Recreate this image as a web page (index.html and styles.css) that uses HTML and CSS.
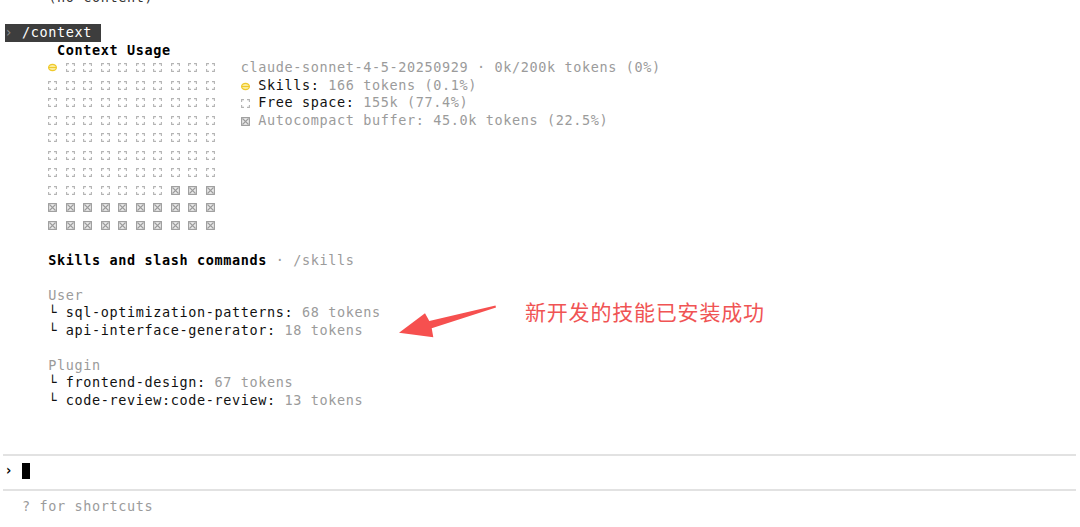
FILE: index.html
```html
<!DOCTYPE html>
<html lang="zh-CN">
<head>
<meta charset="utf-8">
<title>/context</title>
<link rel="stylesheet" href="styles.css">
</head>
<body>
<svg class="defs" width="0" height="0" aria-hidden="true">
  <symbol id="free" viewBox="0 0 9 9">
    <path d="M0.6 3V0.6H3M6 0.6H8.4V3M8.4 6V8.4H6M3 8.4H0.6V6" fill="none" stroke="#b4b4b4" stroke-width="1.1"/>
  </symbol>
  <symbol id="buf" viewBox="0 0 9 9">
    <rect x="0.6" y="0.6" width="7.8" height="7.8" fill="#ececec" stroke="#9c9c9c" stroke-width="1.1"/>
    <path d="M1.5 1.5L7.5 7.5M7.5 1.5L1.5 7.5" stroke="#9c9c9c" stroke-width="1.1"/>
  </symbol>
  <symbol id="used" viewBox="0 0 9 9">
    <ellipse cx="4.5" cy="4.5" rx="3.9" ry="3.1" fill="#fbeea0" stroke="#efc92c" stroke-width="1.2"/>
    <path d="M0.8 4.5H8.2" stroke="#efc92c" stroke-width="1.1"/>
  </symbol>
</svg>

<main class="term">
  <div class="ln dark">     (no content)</div>
  <div class="ln"></div>
  <div class="ln"><span class="cmd"><span class="chev">›</span> /context </span></div>
  <div class="ln b">      Context Usage</div>

  <section class="usage">
    <div class="grid">
      <svg class="ic"><use href="#used"/></svg><svg class="ic"><use href="#free"/></svg><svg class="ic"><use href="#free"/></svg><svg class="ic"><use href="#free"/></svg><svg class="ic"><use href="#free"/></svg><svg class="ic"><use href="#free"/></svg><svg class="ic"><use href="#free"/></svg><svg class="ic"><use href="#free"/></svg><svg class="ic"><use href="#free"/></svg><svg class="ic"><use href="#free"/></svg>
      <svg class="ic"><use href="#free"/></svg><svg class="ic"><use href="#free"/></svg><svg class="ic"><use href="#free"/></svg><svg class="ic"><use href="#free"/></svg><svg class="ic"><use href="#free"/></svg><svg class="ic"><use href="#free"/></svg><svg class="ic"><use href="#free"/></svg><svg class="ic"><use href="#free"/></svg><svg class="ic"><use href="#free"/></svg><svg class="ic"><use href="#free"/></svg>
      <svg class="ic"><use href="#free"/></svg><svg class="ic"><use href="#free"/></svg><svg class="ic"><use href="#free"/></svg><svg class="ic"><use href="#free"/></svg><svg class="ic"><use href="#free"/></svg><svg class="ic"><use href="#free"/></svg><svg class="ic"><use href="#free"/></svg><svg class="ic"><use href="#free"/></svg><svg class="ic"><use href="#free"/></svg><svg class="ic"><use href="#free"/></svg>
      <svg class="ic"><use href="#free"/></svg><svg class="ic"><use href="#free"/></svg><svg class="ic"><use href="#free"/></svg><svg class="ic"><use href="#free"/></svg><svg class="ic"><use href="#free"/></svg><svg class="ic"><use href="#free"/></svg><svg class="ic"><use href="#free"/></svg><svg class="ic"><use href="#free"/></svg><svg class="ic"><use href="#free"/></svg><svg class="ic"><use href="#free"/></svg>
      <svg class="ic"><use href="#free"/></svg><svg class="ic"><use href="#free"/></svg><svg class="ic"><use href="#free"/></svg><svg class="ic"><use href="#free"/></svg><svg class="ic"><use href="#free"/></svg><svg class="ic"><use href="#free"/></svg><svg class="ic"><use href="#free"/></svg><svg class="ic"><use href="#free"/></svg><svg class="ic"><use href="#free"/></svg><svg class="ic"><use href="#free"/></svg>
      <svg class="ic"><use href="#free"/></svg><svg class="ic"><use href="#free"/></svg><svg class="ic"><use href="#free"/></svg><svg class="ic"><use href="#free"/></svg><svg class="ic"><use href="#free"/></svg><svg class="ic"><use href="#free"/></svg><svg class="ic"><use href="#free"/></svg><svg class="ic"><use href="#free"/></svg><svg class="ic"><use href="#free"/></svg><svg class="ic"><use href="#free"/></svg>
      <svg class="ic"><use href="#free"/></svg><svg class="ic"><use href="#free"/></svg><svg class="ic"><use href="#free"/></svg><svg class="ic"><use href="#free"/></svg><svg class="ic"><use href="#free"/></svg><svg class="ic"><use href="#free"/></svg><svg class="ic"><use href="#free"/></svg><svg class="ic"><use href="#free"/></svg><svg class="ic"><use href="#free"/></svg><svg class="ic"><use href="#free"/></svg>
      <svg class="ic"><use href="#free"/></svg><svg class="ic"><use href="#free"/></svg><svg class="ic"><use href="#free"/></svg><svg class="ic"><use href="#free"/></svg><svg class="ic"><use href="#free"/></svg><svg class="ic"><use href="#free"/></svg><svg class="ic"><use href="#free"/></svg><svg class="ic"><use href="#buf"/></svg><svg class="ic"><use href="#buf"/></svg><svg class="ic"><use href="#buf"/></svg>
      <svg class="ic"><use href="#buf"/></svg><svg class="ic"><use href="#buf"/></svg><svg class="ic"><use href="#buf"/></svg><svg class="ic"><use href="#buf"/></svg><svg class="ic"><use href="#buf"/></svg><svg class="ic"><use href="#buf"/></svg><svg class="ic"><use href="#buf"/></svg><svg class="ic"><use href="#buf"/></svg><svg class="ic"><use href="#buf"/></svg><svg class="ic"><use href="#buf"/></svg>
      <svg class="ic"><use href="#buf"/></svg><svg class="ic"><use href="#buf"/></svg><svg class="ic"><use href="#buf"/></svg><svg class="ic"><use href="#buf"/></svg><svg class="ic"><use href="#buf"/></svg><svg class="ic"><use href="#buf"/></svg><svg class="ic"><use href="#buf"/></svg><svg class="ic"><use href="#buf"/></svg><svg class="ic"><use href="#buf"/></svg><svg class="ic"><use href="#buf"/></svg>
    </div>
    <div class="legend">
      <div class="ln dim">claude-sonnet-4-5-20250929 · 0k/200k tokens (0%)</div>
      <div class="ln"><svg class="ic in"><use href="#used"/></svg> Skills:<span class="dim"> 166 tokens (0.1%)</span></div>
      <div class="ln"><svg class="ic in"><use href="#free"/></svg> Free space:<span class="dim"> 155k (77.4%)</span></div>
      <div class="ln dim"><svg class="ic in"><use href="#buf"/></svg> Autocompact buffer: 45.0k tokens (22.5%)</div>
    </div>
  </section>

  <div class="ln"></div>
  <div class="ln"><span class="b">     Skills and slash commands</span><span class="dim"> · /skills</span></div>
  <div class="ln"></div>
  <div class="ln dim">     User</div>
  <div class="ln">     └ sql-optimization-patterns:<span class="dim"> 68 tokens</span></div>
  <div class="ln">     └ api-interface-generator:<span class="dim"> 18 tokens</span></div>
  <div class="ln"></div>
  <div class="ln dim">     Plugin</div>
  <div class="ln">     └ frontend-design:<span class="dim"> 67 tokens</span></div>
  <div class="ln">     └ code-review:code-review:<span class="dim"> 13 tokens</span></div>
  <div class="ln"></div>
  <div class="ln"></div>
  <div class="sep"></div>
  <div class="ln prompt"><span class="arrowch">›</span> <span class="cursor"></span></div>
  <div class="sep"></div>
  <div class="ln dim shortcuts">  ? for shortcuts</div>
</main>

<aside class="note">
  <svg class="note-arrow" width="110" height="40" viewBox="390 302 110 40" aria-hidden="true">
    <polygon points="399,332.7 425,313.3 429.3,321 495.5,305.5 496,307.5 431.7,328.3 433.3,337.3" fill="#f6504f"/>
  </svg>
  <span class="note-text">新开发的技能已安装成功</span>
</aside>
</body>
</html>
```

FILE: styles.css
```css
:root {
  --c: 8.75px;
  --lh: 17.5px;
}

html, body {
  margin: 0;
  padding: 0;
  background: #ffffff;
}

body {
  width: 1080px;
  height: 527px;
  overflow: hidden;
  position: relative;
  font-family: "DejaVu Sans Mono", "Liberation Mono", monospace;
  font-size: 13.5px;
  letter-spacing: 0.6223px;
  color: #111111;
}

.defs {
  position: absolute;
  width: 0;
  height: 0;
}

.term {
  margin-top: -11px;
  padding-left: 4.5px;
}

.ln {
  height: var(--lh);
  line-height: var(--lh);
  white-space: pre;
}

.b {
  font-weight: bold;
  color: #000;
}

.dim {
  color: #9b9b9b;
}

.dark {
  color: #333;
}

.cmd {
  display: inline-block;
  background: #3d3d3d;
  color: #ffffff;
}

.chev {
  color: #8a8a8a;
}

.usage {
  display: flex;
  gap: calc(2 * var(--c));
  padding-left: calc(5 * var(--c));
}

.grid {
  display: grid;
  grid-template-columns: repeat(10, calc(2 * var(--c)));
  grid-auto-rows: var(--lh);
  align-items: center;
}

.ic {
  display: block;
  width: 9px;
  height: 9px;
}

.ic.in {
  display: inline-block;
  vertical-align: -1px;
  margin-right: -0.25px;
}

.sep {
  height: var(--lh);
  display: flex;
  align-items: flex-start;
  margin-left: -4.5px;
}

.sep::before {
  content: "";
  flex: 1;
  height: 2px;
  margin: 9.5px 4px 0 3px;
  background: #e2e2e2;
}

.prompt .arrowch {
  font-weight: bold;
  color: #000;
}

.cursor {
  display: inline-block;
  width: 8px;
  height: 16px;
  background: #000;
  vertical-align: -4px;
}

.shortcuts {
  padding-top: 1.5px;
}

.note {
  position: absolute;
  left: 390px;
  top: 302px;
  display: flex;
  align-items: center;
}

.note-arrow {
  display: block;
}

.note-text {
  position: absolute;
  left: 135px;
  top: -5px;
  white-space: nowrap;
  font-family: "Noto Sans CJK SC", sans-serif;
  font-size: 21px;
  letter-spacing: 0.8px;
  color: #f05454;
  line-height: 28px;
}
```
